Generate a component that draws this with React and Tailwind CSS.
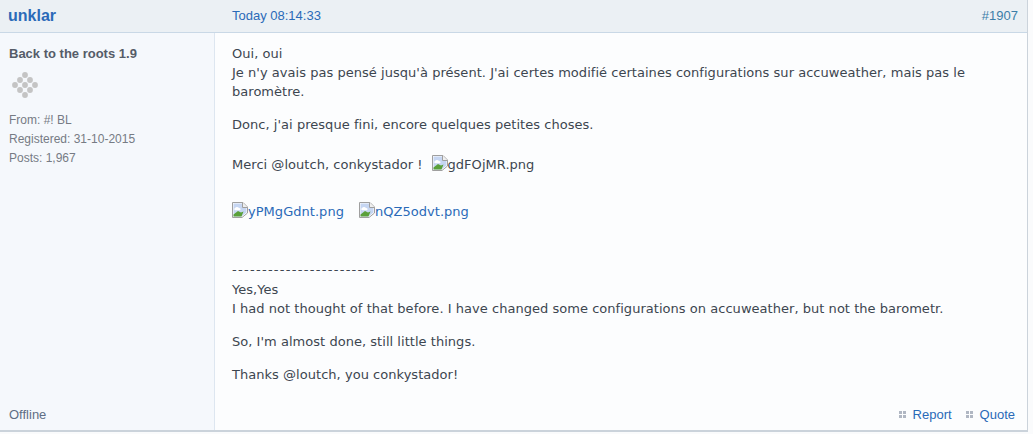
const sans = "font-['Liberation_Sans',Arial,sans-serif]";

function BrokenImage() {
  return (
    <svg width="16" height="16" viewBox="0 0 16 16" className="block -mt-[3px] shrink-0">
      <path d="M0.5 0.5H11L15.5 5V11L10 15.5H0.5Z" fill="#fff" stroke="#9f9f9f" />
      <path d="M1.5 1.5H10.5V5.5H14.5V10.5L9.5 14.5H1.5Z" fill="#c6d6f2" />
      <path d="M3 6C4 4.6 6 4.6 7 6C8.6 6 9.2 7.6 8 8.2H3C2 7.8 2 6.6 3 6Z" fill="#fff" />
      <path d="M1.5 14.5V12.5L6 9L9 10.5L11.5 9.5L9.5 14.5Z" fill="#5aa03a" />
      <path d="M10.5 .5V5.5H15.5" fill="#efefef" stroke="#9f9f9f" />
    </svg>
  );
}

function Rank() {
  const dots = [
    [12, 2], [7, 7], [17, 7], [2, 12], [12, 12], [22, 12], [7, 17], [17, 17], [12, 22],
  ];
  return (
    <svg width="26" height="26" viewBox="0 0 26 26" className="block">
      {dots.map(([x, y]) => (
        <circle key={`${x}-${y}`} cx={x + 1} cy={y + 1} r="2.9" fill="#c4c4c4" />
      ))}
    </svg>
  );
}

function Img({ name, className = "" }) {
  return (
    <span className={`inline-flex items-center ${className}`}>
      <BrokenImage />
      <span>{name}</span>
    </span>
  );
}

function Action({ label }) {
  return (
    <span className="flex items-center gap-[7px]">
      <span className="grid grid-cols-2 gap-[1px]">
        <span className="w-[3px] h-[3px] bg-[#b0b7c3]" />
        <span className="w-[3px] h-[3px] bg-[#b0b7c3]" />
        <span className="w-[3px] h-[3px] bg-[#b0b7c3]" />
        <span className="w-[3px] h-[3px] bg-[#b0b7c3]" />
      </span>
      <span className="text-[#2a6ab8]">{label}</span>
    </span>
  );
}

export default function App() {
  return (
    <div className="w-[1033px] h-[434px] bg-[#fafbfc] overflow-hidden">
      <div className="w-[1028px] h-[432px] flex flex-col bg-[#fcfdfe] border-b-2 border-r border-[#cbd3db]">
        <div className={`h-[33px] shrink-0 flex items-center bg-[#ebf0f4] border-b border-[#c9d8e6] ${sans}`}>
          <div className="w-[215px] pl-[8px] text-[16px] font-bold text-[#2a6ab8]">unklar</div>
          <div className="flex-1 pl-[17px] text-[13px] text-[#2a6ab8]">Today 08:14:33</div>
          <div className="pr-[9px] text-[13px] text-[#3b7ea8]">#1907</div>
        </div>
        <div className="flex-1 flex min-h-0">
          <div className={`w-[215px] shrink-0 flex flex-col bg-[#f5f8fc] border-r border-[#dde6f0] px-[9px] text-[12px] leading-[19px] text-[#767b84] ${sans}`}>
            <div className="mt-[11px] text-[13px] font-bold text-[#555c68]">Back to the roots 1.9</div>
            <div className="mt-[9px] ml-[3px]"><Rank /></div>
            <div className="mt-[13px]">From: #! BL</div>
            <div>Registered: 31-10-2015</div>
            <div>Posts: 1,967</div>
            <div className="mt-auto mb-[6px] text-[13px] text-[#5f6e85]">Offline</div>
          </div>
          <div className="flex-1 flex flex-col min-w-0 pl-[17px] pr-[12px] font-['DejaVu_Sans',Verdana,sans-serif] text-[13px] leading-[19px] tracking-[0.035px] text-[#3d4650]">
            <div className="mt-[11px]">
              <p>Oui, oui</p>
              <p>Je n'y avais pas pensé jusqu'à présent. J'ai certes modifié certaines configurations sur accuweather, mais pas le baromètre.</p>
              <p className="mt-[14px]">Donc, j'ai presque fini, encore quelques petites choses.</p>
              <p className="mt-[21px] flex items-center">Merci @loutch, conkystador !<Img name="gdFOjMR.png" className="ml-[9px]" /></p>
              <p className="mt-[28px] flex items-center text-[#2a6ab8]"><Img name="yPMgGdnt.png" /><Img name="nQZ5odvt.png" className="ml-[15px]" /></p>
              <p className="mt-[39px] mb-[1px] tracking-[1.29px]">------------------------</p>
              <p>Yes,Yes</p>
              <p>I had not thought of that before. I have changed some configurations on accuweather, but not the barometr.</p>
              <p className="mt-[14px]">So, I'm almost done, still little things.</p>
              <p className="mt-[14px]">Thanks @loutch, you conkystador!</p>
            </div>
            <div className={`mt-auto mb-[6px] flex justify-end gap-[14px] text-[13px] tracking-normal ${sans}`}>
              <Action label="Report" />
              <Action label="Quote" />
            </div>
          </div>
        </div>
      </div>
    </div>
  );
}
